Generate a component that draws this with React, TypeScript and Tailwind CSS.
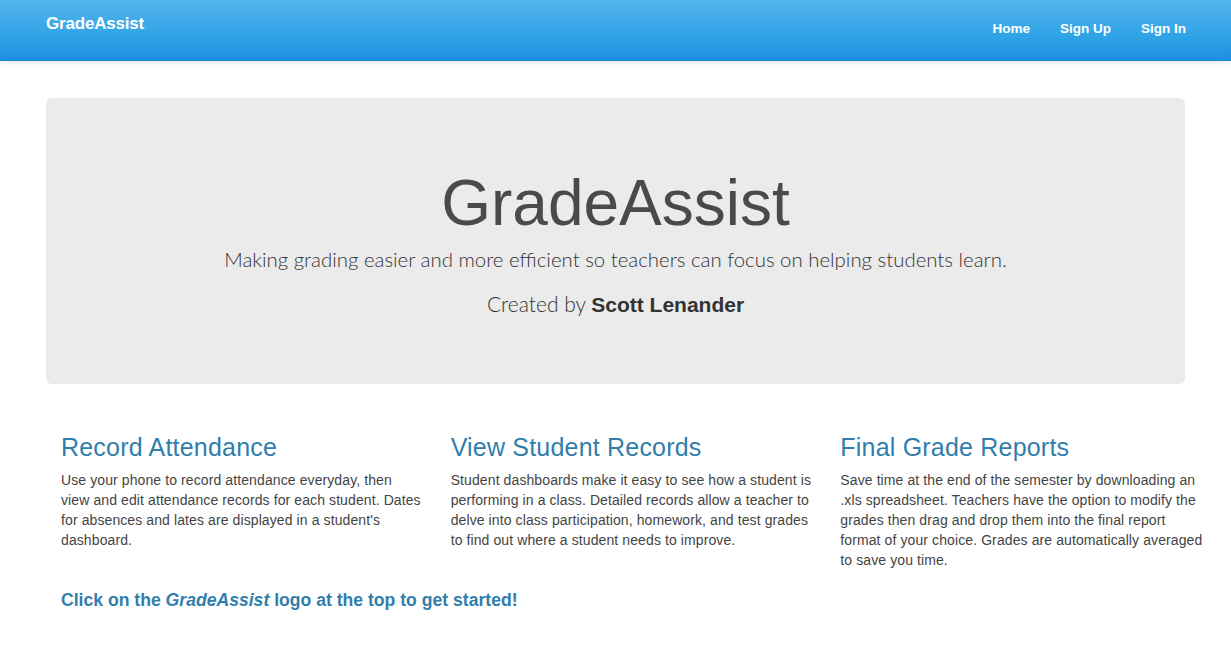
import React from "react";

const features = [
  {
    title: "Record Attendance",
    body: "Use your phone to record attendance everyday, then view and edit attendance records for each student. Dates for absences and lates are displayed in a student's dashboard.",
  },
  {
    title: "View Student Records",
    body: "Student dashboards make it easy to see how a student is performing in a class. Detailed records allow a teacher to delve into class participation, homework, and test grades to find out where a student needs to improve.",
  },
  {
    title: "Final Grade Reports",
    body: "Save time at the end of the semester by downloading an .xls spreadsheet. Teachers have the option to modify the grades then drag and drop them into the final report format of your choice. Grades are automatically averaged to save you time.",
  },
];

export default function App() {
  return (
    <div className="min-h-screen bg-white text-[#555555] font-['Liberation_Sans',Arial,sans-serif]">
      <nav className="h-[61px] border-b border-[#178acc] bg-[linear-gradient(#54b4eb,#2fa4e7_60%,#1d8fe0)] shadow-[0_1px_8px_rgba(0,0,0,0.12)]">
        <div className="flex h-full items-start justify-between pl-[46px] pr-[45px]">
          <a className="mt-[11px] text-[17px] font-bold tracking-[-0.2px] text-white">GradeAssist</a>
          <ul className="mt-[19px] flex gap-[30px] text-[13.5px] font-bold text-white">
            <li>Home</li>
            <li>Sign Up</li>
            <li>Sign In</li>
          </ul>
        </div>
      </nav>

      <div className="px-[46px] pt-[37px]">
        <div className="flex h-[286px] flex-col items-center rounded-[6px] bg-[#ebebeb] pt-[60px]">
          <h1 className="text-[64px] leading-[90px] text-[#4a4a4a]">GradeAssist</h1>
          <p className="mt-[-4px] font-['Lato',sans-serif] text-[20.4px] font-light text-[#333]">
            Making grading easier and more efficient so teachers can focus on helping students learn.
          </p>
          <p className="mt-[13px] font-['Lato',sans-serif] text-[21px] font-light text-[#333]">
            Created by <strong className="font-['Liberation_Sans',Arial,sans-serif] font-bold">Scott Lenander</strong>
          </p>
        </div>
      </div>

      <div className="grid grid-cols-3 px-[31px] pt-[48px]">
        {features.map((f) => (
          <div key={f.title} className="pl-[30px]">
            <h3 className="text-[25px] leading-[30px] tracking-[0.2px] text-[#317eac]">{f.title}</h3>
            <p className="mr-[-3px] mt-[8px] text-[14px] leading-[20px] tracking-[0.1px] text-[#444]">{f.body}</p>
          </div>
        ))}
      </div>

      <h4 className="mt-[17px] px-[61px] text-[17.6px] font-bold text-[#317eac]">
        Click on the <em>GradeAssist</em> logo at the top to get started!
      </h4>
    </div>
  );
}
